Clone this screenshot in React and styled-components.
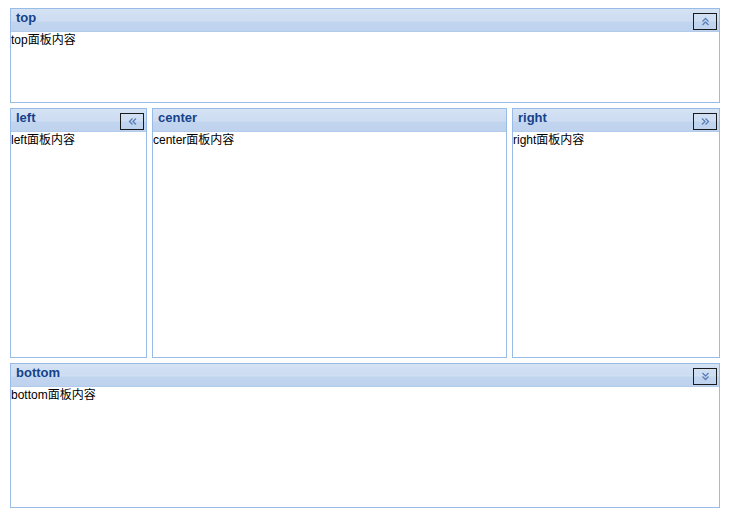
import React from 'react'
import styled, { createGlobalStyle } from 'styled-components'

const GlobalStyle = createGlobalStyle`
    html, body {
        margin: 0;
        padding: 0;
        background: #ffffff;
    }
`

const Layout = styled.div`
    display: flex;
    flex-direction: column;
    gap: 5px;
    width: 710px;
    height: 500px;
    padding: 8px 0 0 10px;
    font-family: "Liberation Sans", "Noto Sans CJK SC", Arial, sans-serif;
`

const MiddleRow = styled.div`
    display: flex;
    gap: 5px;
    height: 250px;
`

const Panel = styled.div`
    box-sizing: border-box;
    display: flex;
    flex-direction: column;
    border: 1px solid #99bbe8;
    background: #ffffff;
    height: ${(p) => (p.$height ? p.$height + 'px' : 'auto')};
    width: ${(p) => (p.$width ? p.$width + 'px' : 'auto')};
    flex: ${(p) => (p.$grow ? '1 1 0' : '0 0 auto')};
    min-width: 0;
`

const Header = styled.div`
    box-sizing: border-box;
    display: flex;
    align-items: flex-start;
    justify-content: space-between;
    height: 23px;
    padding: 1px 2px 0 5px;
    border-bottom: 1px solid #b3cbea;
    background: linear-gradient(
        to bottom,
        #d4e2f4 0,
        #cddcf1 52%,
        #dbe6f6 53%,
        #c2d5ef 58%,
        #bed2ee 100%
    );
`

const Title = styled.span`
    font-weight: bold;
    font-size: 13px;
    line-height: 15px;
    color: #15428b;
`

const ToolButton = styled.button`
    box-sizing: border-box;
    display: flex;
    align-items: center;
    justify-content: center;
    width: 24px;
    height: 17px;
    margin-top: 3px;
    padding: 0;
    border: 1px solid #1a1a1a;
    background: transparent;
    cursor: pointer;
    svg {
        display: block;
    }
`

const Body = styled.div`
    flex: 1;
    padding: 1px 0 0 0;
    font-size: 12px;
    line-height: 15px;
    color: #000000;
    overflow: hidden;
`

const rotations = { up: 0, right: 90, down: 180, left: 270 }

const Chevrons = ({ dir }) => (
    <svg width="9" height="9" viewBox="0 0 9 9" style={{ transform: `rotate(${rotations[dir]}deg)` }}>
        <g fill="none" stroke="#5a7fb8" strokeWidth="1.3">
            <polyline points="1.5,4.5 4.5,1.5 7.5,4.5" />
            <polyline points="1.5,8 4.5,5 7.5,8" />
        </g>
    </svg>
)

const Region = ({ title, tool, children, ...rest }) => (
    <Panel {...rest}>
        <Header>
            <Title>{title}</Title>
            {tool && (
                <ToolButton>
                    <Chevrons dir={tool} />
                </ToolButton>
            )}
        </Header>
        <Body>{children}</Body>
    </Panel>
)

const App = () => {
    return (
        <>
            <GlobalStyle />
            <Layout>
                <Region title="top" tool="up" $height={95}>top面板内容</Region>
                <MiddleRow>
                    <Region title="left" tool="left" $width={137}>left面板内容</Region>
                    <Region title="center" $grow>center面板内容</Region>
                    <Region title="right" tool="right" $width={208}>right面板内容</Region>
                </MiddleRow>
                <Region title="bottom" tool="down" $height={145}>bottom面板内容</Region>
            </Layout>
        </>
    )
}

export default App
